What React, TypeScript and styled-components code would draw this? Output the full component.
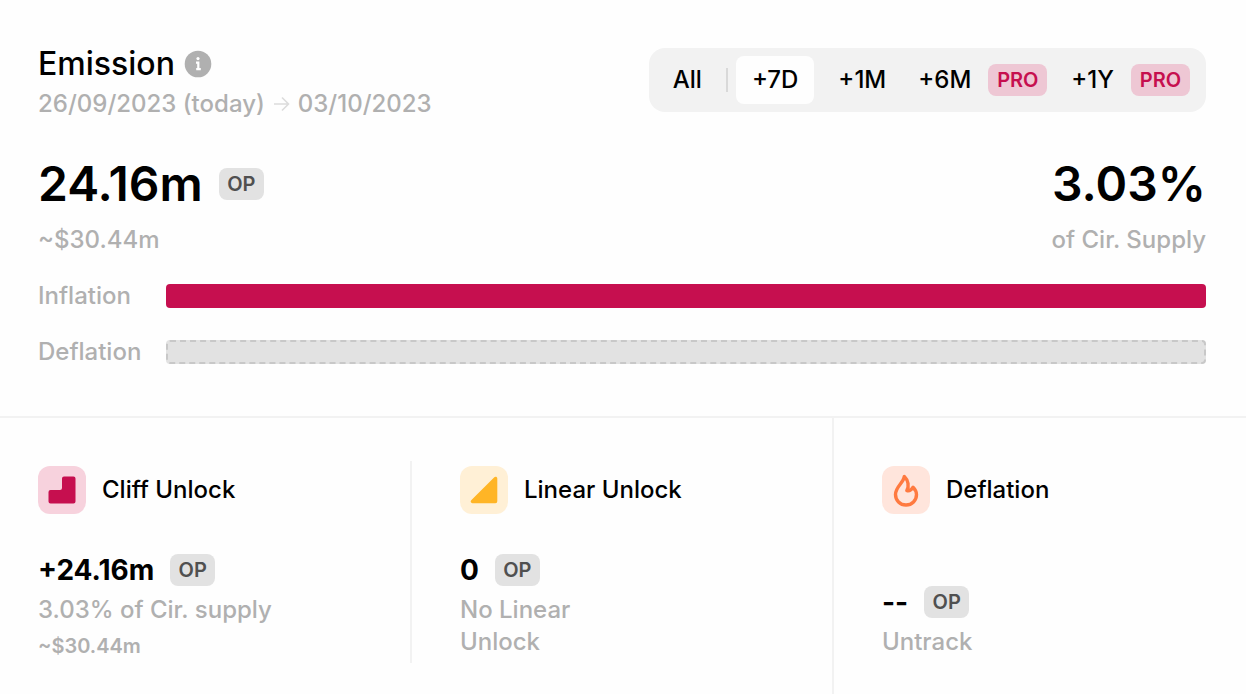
import React from "react";
import styled, { createGlobalStyle } from "styled-components";

const GlobalStyle = createGlobalStyle`
  *, *::before, *::after { box-sizing: border-box; }
  body {
    margin: 0;
    background: #fefefe;
    color: #000;
    font-family: Inter, "Liberation Sans", sans-serif;
    font-size: 24px;
    font-weight: 500;
    line-height: 32px;
  }
  h1, h2, p { margin: 0; font: inherit; }
`;

const Page = styled.main`
  display: flex;
  flex-direction: column;
  min-height: 100vh;
`;

const Summary = styled.section`
  padding: 48px 40px 48px 38px;
  border-bottom: 2px solid #f2f2f2;
`;

const Header = styled.header`
  display: flex;
  justify-content: space-between;
  align-items: flex-start;
  margin-bottom: 32px;
`;

const TitleRow = styled.div`
  display: flex;
  align-items: center;
  gap: 9px;
  margin-bottom: 8px;
`;

const Title = styled.h1`
  && { font-size: 32px; font-weight: 500; }
`;

const InfoButton = styled.button`
  display: flex;
  padding: 0;
  border: 0;
  background: none;
`;

const Dates = styled.p`
  display: flex;
  align-items: center;
  gap: 8px;
  color: #b0b0b0;
`;

const Ranges = styled.nav`
  display: flex;
  align-items: center;
  padding: 8px;
  border-radius: 16px;
  background: #f2f2f2;
`;

const RangeButton = styled.button<{ $active?: boolean; $pro?: boolean }>`
  display: flex;
  align-items: center;
  gap: 17px;
  height: 48px;
  margin: ${(p) => (p.$active ? "0 8px" : "0")};
  padding: ${(p) => (p.$pro ? "0 8px 0 16px" : "0 16px")};
  border: 0;
  border-radius: 8px;
  background: ${(p) => (p.$active ? "#fefefe" : "transparent")};
  color: #000;
  font: inherit;
`;

const RangeDivider = styled.span`
  width: 2px;
  height: 24px;
  margin-left: 8px;
  background: #d9d9d9;
`;

const Tag = styled.span<{ $pro?: boolean }>`
  min-width: ${(p) => (p.$pro ? "59px" : "45px")};
  border-radius: 8px;
  background: ${(p) => (p.$pro ? "#eec7d4" : "#e2e2e2")};
  color: ${(p) => (p.$pro ? "#c60f4f" : "#505050")};
  font-size: 20px;
  font-weight: 600;
  line-height: 32px;
  text-align: center;
`;

const Totals = styled.div`
  display: flex;
  justify-content: space-between;
  margin-bottom: 24px;
`;

const Total = styled.div<{ $end?: boolean }>`
  display: flex;
  flex-direction: column;
  gap: 8px;
  align-items: ${(p) => (p.$end ? "flex-end" : "flex-start")};
`;

const TotalValue = styled.div`
  display: flex;
  align-items: center;
  gap: 16px;
  font-size: 48px;
  font-weight: 600;
  line-height: 64px;
`;

const Muted = styled.p`
  color: #b0b0b0;
`;

const Bars = styled.div`
  display: flex;
  flex-direction: column;
  gap: 24px;
`;

const BarRow = styled.div`
  display: grid;
  grid-template-columns: 128px 1fr;
  align-items: center;
`;

const Bar = styled.div<{ $empty?: boolean }>`
  height: 24px;
  border-radius: 4px;
  background: ${(p) => (p.$empty ? "#e2e2e2" : "#c60f4f")};
  border: ${(p) => (p.$empty ? "2px dashed #c8c8c8" : "0")};
`;

const Breakdown = styled.section`
  display: grid;
  grid-template-columns: 834fr 412fr;
  flex: 1;
`;

const Unlocks = styled.div`
  display: grid;
  grid-template-columns: 412fr 420fr;
  align-items: start;
  padding: 43px 0 31px;
  border-right: 2px solid #f2f2f2;
`;

const Card = styled.article<{ $first?: boolean }>`
  display: flex;
  flex-direction: column;
  align-self: stretch;
  justify-content: space-between;
  gap: 40px;
  padding: ${(p) => (p.$first ? "5px 48px 5px 38px" : "5px 48px")};
  border-right: ${(p) => (p.$first ? "2px solid #f2f2f2" : "0")};
`;

const DeflationPane = styled.div`
  display: grid;
  padding: 43px 0 31px;
`;

const CardHead = styled.header`
  display: flex;
  align-items: center;
  gap: 16px;
`;

const IconTile = styled.span<{ $tint: string }>`
  display: flex;
  align-items: center;
  justify-content: center;
  width: 48px;
  height: 48px;
  border-radius: 12px;
  background: ${(p) => p.$tint};
`;

const CardBody = styled.div`
  display: flex;
  flex-direction: column;
  gap: 8px;
`;

const CardValue = styled.div`
  display: flex;
  align-items: center;
  gap: 16px;
  font-size: 28px;
  font-weight: 700;
`;

const Wrapped = styled(Muted)`
  max-width: 160px;
`;

const SmallMuted = styled(Muted)`
  && { font-size: 20px; font-weight: 600; line-height: 24px; }
`;

const InfoIcon = () => (
  <svg width="28" height="28" viewBox="0 0 28 28" aria-hidden="true">
    <circle cx="14" cy="14" r="13.3" fill="#b0b0b0" />
    <circle cx="14" cy="8.6" r="1.6" fill="#fff" />
    <path d="M12 12.6h2.300v6.4M12.200 19.100h4.600" fill="none" stroke="#fff" strokeWidth="2.200" />
  </svg>
);

const ArrowIcon = () => (
  <svg width="17" height="16" viewBox="0 0 17 16" fill="none" stroke="#dcdcdc" strokeWidth="1.6" aria-hidden="true">
    <path d="M1 8h14.5M9 1.5L15.5 8 9 14.5" />
  </svg>
);

const CliffIcon = () => (
  <svg width="48" height="48" viewBox="0 0 48 48" aria-hidden="true">
    <path
      d="M26 10.5h9.5a2 2 0 0 1 2 2v23a2 2 0 0 1-2 2h-23a2 2 0 0 1-2-2V26a2 2 0 0 1 2-2h9.5a2 2 0 0 0 2-2v-9.500a2 2 0 0 1 2-2z"
      fill="#c60f4f"
    />
  </svg>
);

const LinearIcon = () => (
  <svg width="48" height="48" viewBox="0 0 48 48" aria-hidden="true">
    <path d="M34.300 11.200c1.100-1.100 3-.4 3 1.200v22.900a1.900 1.900 0 0 1-1.900 1.900H12.400c-1.600 0-2.300-1.800-1.200-2.900z" fill="#ffb526" />
  </svg>
);

const FlameIcon = () => (
  <svg width="48" height="48" viewBox="0 0 48 48" fill="none" aria-hidden="true">
    <path
      d="M22.300 10.500C21.500 17 13.500 20.500 13.500 28.500C13.500 34.500 18 39 24 39S34.500 34.500 34.500 28.500C34.500 25.500 33.300 23.500 31 21.200C29.700 23.600 27.700 25.200 24.800 24.600C27.200 20.500 26.500 14.500 22.300 10.500Z"
      stroke="#ff7a40"
      strokeWidth="3.400"
      strokeLinejoin="round"
    />
  </svg>
);

export default function App() {
  return (
    <>
      <GlobalStyle />
      <Page>
        <Summary>
          <Header>
            <div>
              <TitleRow>
                <Title>Emission</Title>
                <InfoButton type="button" aria-label="About emission">
                  <InfoIcon />
                </InfoButton>
              </TitleRow>
              <Dates>
                <span>26/09/2023 (today)</span>
                <ArrowIcon />
                <span>03/10/2023</span>
              </Dates>
            </div>
            <Ranges aria-label="Period">
              <RangeButton type="button">All</RangeButton>
              <RangeDivider />
              <RangeButton type="button" $active aria-pressed="true">+7D</RangeButton>
              <RangeButton type="button">+1M</RangeButton>
              <RangeButton type="button" $pro>
                +6M <Tag $pro>PRO</Tag>
              </RangeButton>
              <RangeButton type="button" $pro>
                +1Y <Tag $pro>PRO</Tag>
              </RangeButton>
            </Ranges>
          </Header>

          <Totals>
            <Total>
              <TotalValue>
                24.16m <Tag>OP</Tag>
              </TotalValue>
              <Muted>~$30.44m</Muted>
            </Total>
            <Total $end>
              <TotalValue>3.03%</TotalValue>
              <Muted>of Cir. Supply</Muted>
            </Total>
          </Totals>

          <Bars>
            <BarRow>
              <Muted>Inflation</Muted>
              <Bar />
            </BarRow>
            <BarRow>
              <Muted>Deflation</Muted>
              <Bar $empty />
            </BarRow>
          </Bars>
        </Summary>

        <Breakdown>
          <Unlocks>
            <Card $first>
              <CardHead>
                <IconTile $tint="#f7d2dd"><CliffIcon /></IconTile>
                <h2>Cliff Unlock</h2>
              </CardHead>
              <CardBody>
                <CardValue>
                  +24.16m <Tag>OP</Tag>
                </CardValue>
                <Muted>3.03% of Cir. supply</Muted>
                <SmallMuted>~$30.44m</SmallMuted>
              </CardBody>
            </Card>
            <Card>
              <CardHead>
                <IconTile $tint="#fff0d6"><LinearIcon /></IconTile>
                <h2>Linear Unlock</h2>
              </CardHead>
              <CardBody>
                <CardValue>
                  0 <Tag>OP</Tag>
                </CardValue>
                <Wrapped>No Linear Unlock</Wrapped>
              </CardBody>
            </Card>
          </Unlocks>
          <DeflationPane>
            <Card>
              <CardHead>
                <IconTile $tint="#ffe5dc"><FlameIcon /></IconTile>
                <h2>Deflation</h2>
              </CardHead>
              <CardBody>
                <CardValue>
                  -- <Tag>OP</Tag>
                </CardValue>
                <Muted>Untrack</Muted>
              </CardBody>
            </Card>
          </DeflationPane>
        </Breakdown>
      </Page>
    </>
  );
}
